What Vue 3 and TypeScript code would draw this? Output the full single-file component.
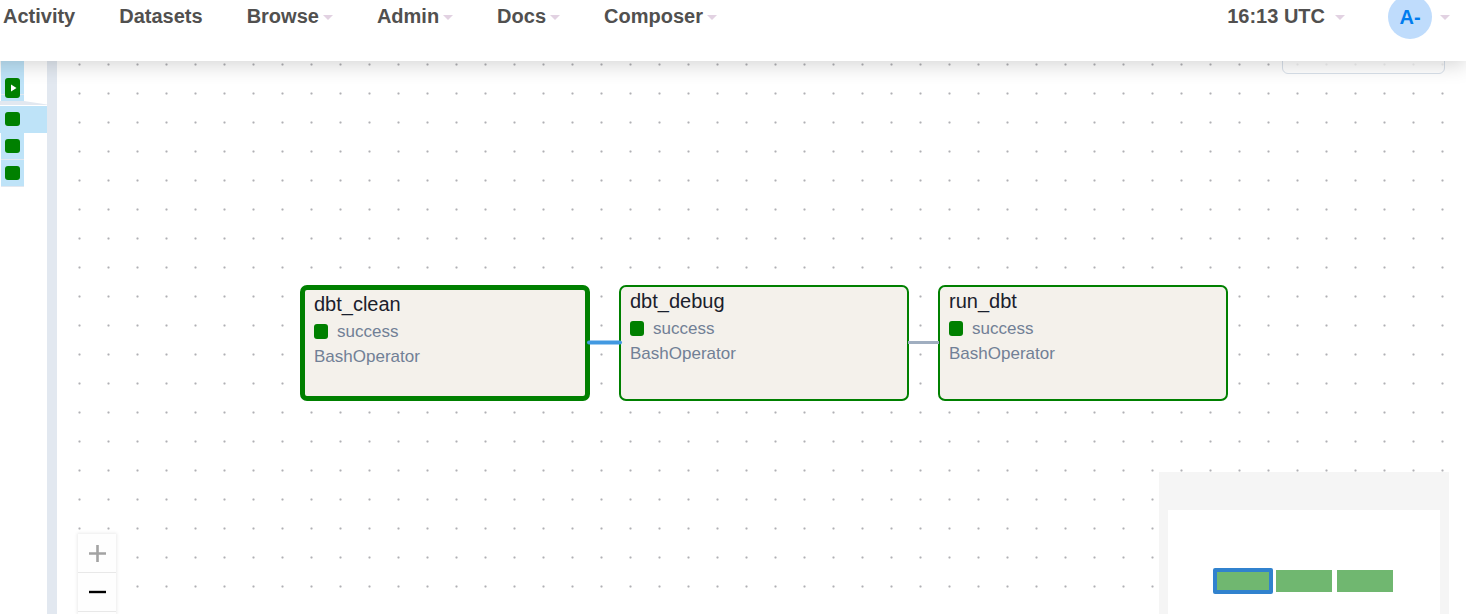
<script setup lang="ts">
interface NavItem {
  label: string
  menu: boolean
}

interface TaskNode {
  id: string
  state: string
  operator: string
  x: number
  y: number
  selected: boolean
}

const navItems: NavItem[] = [
  { label: 'Activity', menu: false },
  { label: 'Datasets', menu: false },
  { label: 'Browse', menu: true },
  { label: 'Admin', menu: true },
  { label: 'Docs', menu: true },
  { label: 'Composer', menu: true },
]

const tasks: TaskNode[] = [
  { id: 'dbt_clean', state: 'success', operator: 'BashOperator', x: 243, y: 224, selected: true },
  { id: 'dbt_debug', state: 'success', operator: 'BashOperator', x: 562, y: 224, selected: false },
  { id: 'run_dbt', state: 'success', operator: 'BashOperator', x: 881, y: 224, selected: false },
]
</script>

<template>
  <div class="page">
    <header class="topbar">
      <nav class="nav">
        <a v-for="item in navItems" :key="item.label" href="#" class="nav-link">
          <span class="label">{{ item.label }}</span>
          <span v-if="item.menu" class="caret"></span>
        </a>
      </nav>
      <div class="user-area">
        <a href="#" class="nav-link clock"><span class="label">16:13 UTC</span><span class="caret"></span></a>
        <a href="#" class="nav-link account"><span class="avatar">A-</span><span class="caret"></span></a>
      </div>
    </header>

    <main class="content">
      <aside class="grid-panel">
        <div class="run-cell">
          <button class="run-bar" type="button">
            <svg width="6" height="8" viewBox="0 0 6 8"><path d="M0 0.5 L5.5 4 L0 7.5 Z" fill="#fff" /></svg>
          </button>
        </div>
        <svg class="divider" viewBox="0 0 47 5" width="47" height="5">
          <path d="M0 0 H24 L47 3.5 V4 H0 Z" fill="#e2e8f0" />
        </svg>
        <div class="task-cell active"><button class="task-square" type="button"></button></div>
        <div class="task-cell"><button class="task-square" type="button"></button></div>
        <div class="task-cell"><button class="task-square" type="button"></button></div>
      </aside>
      <div class="resizer"></div>

      <section class="graph">
        <div class="legend"></div>

        <article
          v-for="task in tasks"
          :key="task.id"
          class="node"
          :class="{ selected: task.selected }"
          :style="{ left: task.x + 'px', top: task.y + 'px' }"
        >
          <h2 class="node-title">{{ task.id }}</h2>
          <p class="node-state"><span class="state-square"></span>{{ task.state }}</p>
          <p class="node-operator">{{ task.operator }}</p>
        </article>

        <svg class="edges" width="1180" height="400" viewBox="0 0 1180 400">
          <line x1="532" y1="281.5" x2="563" y2="281.5" stroke="#4299e1" stroke-width="4" stroke-linecap="round" />
          <line x1="851" y1="281.5" x2="882" y2="281.5" stroke="#a0aec0" stroke-width="3" />
        </svg>

        <div class="controls">
          <button type="button" class="control" disabled>
            <svg width="17" height="17" viewBox="0 0 17 17">
              <path d="M0 8.5 H17 M8.5 0 V17" stroke="#a3a3a3" stroke-width="2.6" fill="none" />
            </svg>
          </button>
          <button type="button" class="control">
            <svg width="17" height="17" viewBox="0 0 17 17">
              <path d="M0 8 H17" stroke="#000" stroke-width="2.4" fill="none" />
            </svg>
          </button>
        </div>

        <svg class="minimap" width="290" height="218" viewBox="0 0 290 218">
          <rect width="290" height="218" fill="#f5f5f5" />
          <rect x="9" y="38" width="272" height="142" fill="#fff" />
          <rect x="56" y="98" width="56" height="22" fill="#70b770" stroke="#3182ce" stroke-width="4" stroke-linejoin="round" />
          <rect x="117" y="98" width="56" height="22" fill="#70b770" />
          <rect x="178" y="98" width="56" height="22" fill="#70b770" />
        </svg>
      </section>
    </main>
  </div>
</template>

<style>
body {
  margin: 0;
  background: #fff;
}
</style>

<style scoped>
.page {
  display: flex;
  flex-direction: column;
  height: 100vh;
  overflow: hidden;
  background: #fff;
  font-family: "Liberation Sans", Arial, sans-serif;
}

.topbar {
  position: relative;
  z-index: 2;
  display: flex;
  justify-content: space-between;
  flex: none;
  box-sizing: border-box;
  margin-left: -24px;
  padding: 0 16px 28px 27px;
  background: #fff;
  box-shadow: 0 4px 20px rgba(0, 0, 0, 0.17);
}

.nav,
.user-area {
  display: flex;
  align-items: center;
  height: 33px;
}

.nav {
  gap: 44px;
}

.user-area {
  gap: 43px;
}

.nav-link {
  display: flex;
  align-items: center;
  gap: 4px;
  color: #51504f;
  font-size: 20px;
  font-weight: 700;
  line-height: 24px;
  text-decoration: none;
  white-space: nowrap;
}

.label {
  padding-bottom: 2px;
}

.clock {
  gap: 10px;
}

.account {
  gap: 8px;
}

.caret {
  width: 0;
  height: 0;
  margin-top: 2px;
  border-top: 5px solid #e2d2e2;
  border-right: 5px solid transparent;
  border-left: 5px solid transparent;
}

.avatar {
  width: 44px;
  height: 44px;
  border-radius: 50%;
  background: #bfdcfc;
  color: #017cee;
  line-height: 44px;
  text-align: center;
}

.content {
  display: flex;
  flex: 1;
  min-height: 0;
}

.grid-panel {
  flex: none;
  width: 47px;
}

.run-cell {
  box-sizing: border-box;
  width: 23px;
  height: 40px;
  margin-left: 1px;
  padding: 17px 4px 0;
  background: linear-gradient(#e2e8f0, #e2e8f0) 0 33px / 100% 1px no-repeat #bee3f8;
}

.run-bar {
  display: flex;
  align-items: center;
  justify-content: center;
  width: 15px;
  height: 20px;
  padding: 0 0 0 2px;
  border: 0;
  border-radius: 3px;
  background: #008000;
}

.divider {
  display: block;
}

.task-cell {
  box-sizing: border-box;
  width: 23px;
  height: 27px;
  margin-left: 1px;
  padding: 6px 4px;
  border-bottom: 1px solid #e2e8f0;
  background: #bee3f8;
}

.task-cell.active {
  width: 47px;
  margin-left: 0;
  padding-left: 5px;
  border-bottom-color: #bee3f8;
}

.task-square {
  display: block;
  width: 15px;
  height: 14px;
  padding: 0;
  border: 0;
  border-radius: 3px;
  background: #008000;
}

.resizer {
  flex: none;
  width: 10px;
  background: #e2e8f0;
}

.graph {
  position: relative;
  flex: 1;
  overflow: hidden;
  background-image: radial-gradient(circle at center, #b0b0b4 0, #b0b0b4 0.5px, transparent 1.6px);
  background-position: 8px -11px;
  background-size: 29px 29px;
}

.legend {
  position: absolute;
  top: -28px;
  right: 21px;
  box-sizing: border-box;
  width: 163px;
  height: 41px;
  border: 1px solid #d8e0ea;
  border-radius: 6px;
  background: rgba(255, 255, 255, 0.8);
}

.node {
  position: absolute;
  box-sizing: border-box;
  width: 290px;
  height: 116px;
  padding: 1px 9px;
  border: 2px solid #008000;
  border-radius: 7px;
  background: #f4f1eb;
}

.node.selected {
  border-width: 5px;
}

.node-title,
.node-state,
.node-operator {
  margin: 0;
  font-weight: 400;
}

.node-title {
  color: #1a202c;
  font-size: 20px;
  line-height: 26px;
}

.node-state {
  display: flex;
  align-items: center;
  gap: 9px;
  color: #718096;
  font-size: 17px;
  line-height: 30px;
}

.node-operator {
  color: #718096;
  font-size: 17px;
  line-height: 20px;
}

.state-square {
  width: 14px;
  height: 15px;
  margin-bottom: 2px;
  border-radius: 3px;
  background: #008000;
}

.edges {
  position: absolute;
  top: 0;
  left: 0;
  pointer-events: none;
}

.controls {
  position: absolute;
  bottom: 0;
  left: 21px;
  display: flex;
  flex-direction: column;
  padding-bottom: 2px;
  background: #fefefe;
  box-shadow: 0 0 3px 1px rgba(0, 0, 0, 0.08);
}

.control {
  display: flex;
  align-items: center;
  justify-content: center;
  box-sizing: border-box;
  width: 38px;
  height: 39px;
  padding: 0;
  border: 0;
  border-bottom: 1px solid #e8e8e8;
  background: #fefefe;
}

.minimap {
  position: absolute;
  right: 17px;
  bottom: -76px;
}
</style>
